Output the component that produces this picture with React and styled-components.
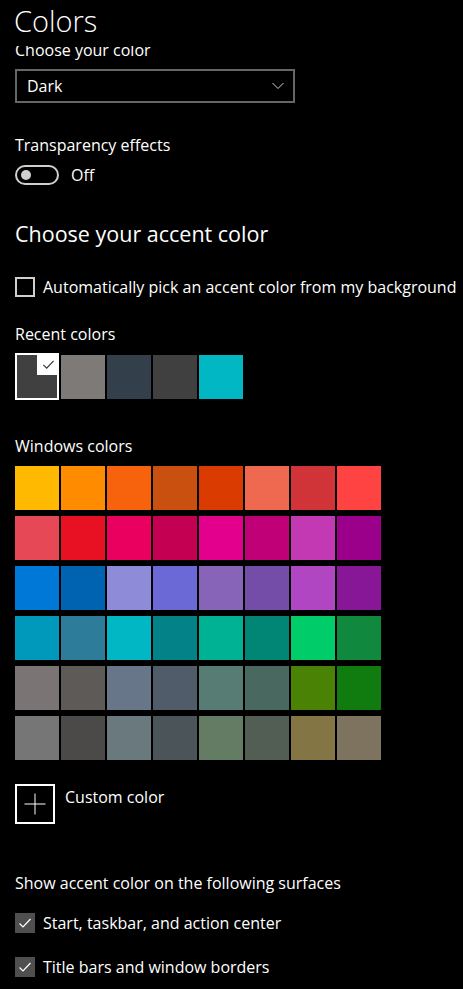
import React from "react";
import styled, { createGlobalStyle } from "styled-components";

const Global = createGlobalStyle`
  html, body { margin: 0; padding: 0; background: #000; }
  body { font-family: "Open Sans", "Noto Sans", sans-serif; color: #fff; }
  * { box-sizing: border-box; }
`;

const Page = styled.div`
  width: 463px;
  height: 989px;
  background: #000;
  display: flex;
  flex-direction: column;
  overflow: hidden;
`;

const Header = styled.div`
  height: 46px;
  flex: none;
  padding-left: 14px;
`;

const Title = styled.h1`
  margin: 0;
  font-size: 29px;
  font-weight: 300;
  line-height: 38px;
  padding-top: 2px;
`;

const Viewport = styled.div`
  flex: 1;
  overflow: hidden;
`;

const Content = styled.div`
  margin-top: -6px;
  padding-left: 15px;
  display: flex;
  flex-direction: column;
  align-items: flex-start;
`;

const Label = styled.div`
  font-size: 16px;
  line-height: 20px;
  margin-top: ${(p) => p.$mt || 0}px;
`;

const Subheading = styled.h2`
  margin: 0;
  margin-top: ${(p) => p.$mt || 0}px;
  font-size: 21.5px;
  font-weight: 400;
  line-height: 28px;
`;

const Dropdown = styled.div`
  margin-top: 9px;
  width: 280px;
  height: 34px;
  border: 2px solid #666;
  display: flex;
  align-items: center;
  justify-content: space-between;
  padding: 0 9px 0 10px;
  font-size: 16px;
`;

const ToggleRow = styled.div`
  margin-top: 10px;
  display: flex;
  align-items: center;
  gap: 12px;
  font-size: 16px;
  line-height: 20px;
`;

const Toggle = styled.div`
  width: 44px;
  height: 20px;
  border: 2px solid #cfcfcf;
  border-radius: 10px;
  display: flex;
  align-items: center;
  padding-left: 4px;
  &::before {
    content: "";
    width: 10px;
    height: 10px;
    border-radius: 50%;
    background: #cfcfcf;
  }
`;

const CheckRow = styled.div`
  margin-top: ${(p) => p.$mt || 0}px;
  display: flex;
  align-items: center;
  gap: 8px;
  font-size: 16px;
  line-height: 20px;
  white-space: nowrap;
`;

const Box = styled.div`
  width: 20px;
  height: 20px;
  flex: none;
  border: ${(p) => (p.$checked ? "none" : "2px solid #cfcfcf")};
  background: ${(p) => (p.$checked ? "#4f4f4f" : "transparent")};
  display: flex;
  align-items: center;
  justify-content: center;
`;

const SwatchRow = styled.div`
  margin-top: 9px;
  display: flex;
  align-items: flex-start;
  gap: 2px;
`;

const Swatch = styled.div`
  width: 44px;
  height: 44px;
  background: ${(p) => p.$c};
  margin-top: ${(p) => p.$mt || 0}px;
`;

const Selected = styled.div`
  position: relative;
  width: 44px;
  height: 47px;
  background: ${(p) => p.$c};
  border: 2px solid #fff;
`;

const Corner = styled.div`
  position: absolute;
  top: -2px;
  right: -2px;
  width: 22px;
  height: 22px;
  background: #fff;
  display: flex;
  align-items: center;
  justify-content: center;
`;

const Grid = styled.div`
  margin-top: 10px;
  display: grid;
  grid-template-columns: repeat(8, 44px);
  grid-auto-rows: 44px;
  column-gap: 2px;
  row-gap: 6px;
`;

const CustomRow = styled.div`
  margin-top: 24px;
  display: flex;
  align-items: flex-start;
  gap: 10px;
  font-size: 16px;
  line-height: 20px;
`;

const PlusBox = styled.div`
  width: 40px;
  height: 40px;
  border: 2px solid #fff;
  display: flex;
  align-items: center;
  justify-content: center;
`;

const CustomLabel = styled.span`
  margin-top: 3px;
`;

const recent = ["#7e7a78", "#333f4b", "#404040", "#00b7c3"];

const windowsColors = [
  "#FFB900", "#FF8C00", "#F7630C", "#CA5010", "#DA3B01", "#EF6950", "#D13438", "#FF4343",
  "#E74856", "#E81123", "#EA005E", "#C30052", "#E3008C", "#BF0077", "#C239B3", "#9A0089",
  "#0078D7", "#0063B1", "#8E8CD8", "#6B69D6", "#8764B8", "#744DA9", "#B146C2", "#881798",
  "#0099BC", "#2D7D9A", "#00B7C3", "#038387", "#00B294", "#018574", "#00CC6A", "#10893E",
  "#7A7574", "#5D5A58", "#68768A", "#515C6B", "#567C73", "#486860", "#498205", "#107C10",
  "#767676", "#4C4A48", "#69797E", "#4A5459", "#647C64", "#525E54", "#847545", "#7E735F",
];

const Check = ({ color = "#fff", size = 14 }) => (
  <svg width={size} height={size} viewBox="0 0 14 14">
    <path d="M1.5 7.5 L5 11 L12.5 3" fill="none" stroke={color} strokeWidth="1.2" />
  </svg>
);

export default function App() {
  return (
    <Page>
      <Global />
      <Header>
        <Title>Colors</Title>
      </Header>
      <Viewport>
        <Content>
          <Label>Choose your color</Label>
          <Dropdown>
            <span>Dark</span>
            <svg width="12" height="8" viewBox="0 0 12 8">
              <path d="M0.5 1 L6 6.5 L11.5 1" fill="none" stroke="#cfcfcf" strokeWidth="1" />
            </svg>
          </Dropdown>
          <Label $mt={32}>Transparency effects</Label>
          <ToggleRow>
            <Toggle />
            <span>Off</span>
          </ToggleRow>
          <Subheading $mt={35}>Choose your accent color</Subheading>
          <CheckRow $mt={29}>
            <Box />
            <span>Automatically pick an accent color from my background</span>
          </CheckRow>
          <Label $mt={27}>Recent colors</Label>
          <SwatchRow>
            <Selected $c="#404040">
              <Corner>
                <Check color="#333" size={13} />
              </Corner>
            </Selected>
            {recent.map((c) => (
              <Swatch key={c} $c={c} $mt={2} />
            ))}
          </SwatchRow>
          <Label $mt={36}>Windows colors</Label>
          <Grid>
            {windowsColors.map((c) => (
              <Swatch key={c} $c={c} />
            ))}
          </Grid>
          <CustomRow>
            <PlusBox>
              <svg width="22" height="22" viewBox="0 0 22 22">
                <path d="M11 0.5 V21.5 M0.5 11 H21.5" stroke="#fff" strokeWidth="1" />
              </svg>
            </PlusBox>
            <CustomLabel>Custom color</CustomLabel>
          </CustomRow>
          <Label $mt={49}>Show accent color on the following surfaces</Label>
          <CheckRow $mt={20}>
            <Box $checked>
              <Check />
            </Box>
            <span>Start, taskbar, and action center</span>
          </CheckRow>
          <CheckRow $mt={24}>
            <Box $checked>
              <Check />
            </Box>
            <span>Title bars and window borders</span>
          </CheckRow>
        </Content>
      </Viewport>
    </Page>
  );
}
